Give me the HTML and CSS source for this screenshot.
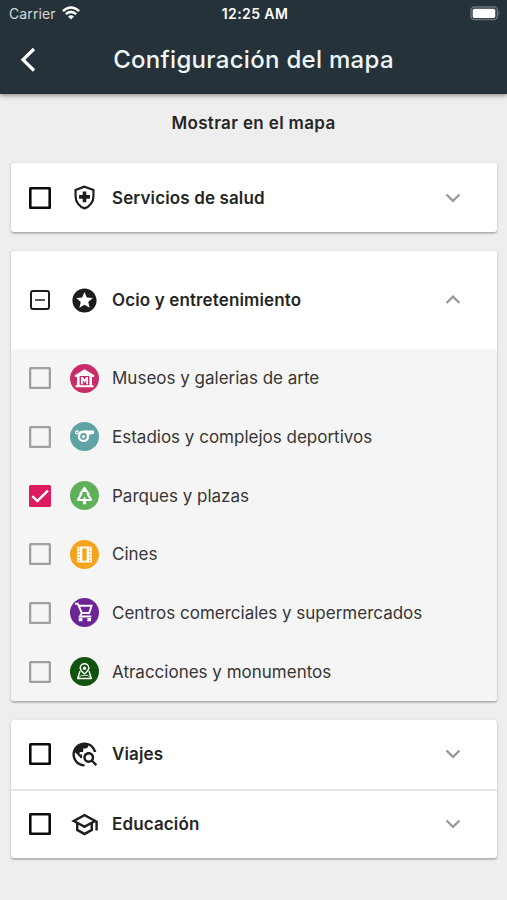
FILE: index.html
```html
<!DOCTYPE html>
<html lang="es">
<head>
<meta charset="utf-8">
<title>Configuración del mapa</title>
<link rel="stylesheet" href="styles.css">
</head>
<body>
<header class="header">
  <div class="status">
    <div class="carrier"><span>Carrier</span>
      <svg class="wifi" viewBox="0 0 18 14"><g fill="none" stroke="#fff" stroke-width="2.5"><path d="M.9 5.1Q9-2 17.1 5.1"/><path d="M3.8 8.1Q9 3.7 14.2 8.1"/></g><path d="M6 10.5Q9 8 12 10.5L9 13.6z" fill="#fff"/></svg>
    </div>
    <div class="clock">12:25 AM</div>
    <svg class="battery" viewBox="0 0 31 15"><rect x="1" y="1" width="26.4" height="12.6" rx="3.6" fill="none" stroke="#68747a" stroke-width="1.5"/><rect x="2.7" y="2.7" width="22.6" height="9.2" rx="1.6" fill="#fff"/><path d="M28.6 5q1.9 2.3 0 4.6z" fill="#707a7f"/></svg>
  </div>
  <div class="bar">
    <svg class="back" viewBox="0 0 16 26"><path d="M14 2 3 12.7 14 23.5" fill="none" stroke="#fff" stroke-width="3.2"/></svg>
    <h1>Configuración del mapa</h1>
  </div>
</header>
<main>
  <h2>Mostrar en el mapa</h2>

  <section class="card">
    <div class="row">
      <span class="check"></span>
      <svg class="icon" viewBox="0 0 24 24"><path fill="none" stroke="#1d1d1d" stroke-width="1.8" d="M12 3 4.600 5.700v5.400c0 4.500 3.200 8.600 7.400 9.900 4.200-1.300 7.400-5.400 7.400-9.900V5.700z"/><path fill="#1d1d1d" d="M10.500 7h3v3h3v3h-3v3h-3v-3h-3v-3h3z"/></svg>
      <span class="label">Servicios de salud</span>
      <svg class="chevron" viewBox="0 0 16 10"><path d="m1.500 1.500 6.500 6.300 6.500-6.300"/></svg>
    </div>
  </section>

  <section class="card">
    <div class="row tall">
      <span class="check partial"></span>
      <svg class="icon" viewBox="0 0 24 24"><path fill="#1d1d1d" d="M11.990 2C6.470 2 2 6.480 2 12s4.470 10 9.990 10C17.520 22 22 17.520 22 12S17.520 2 11.990 2zm4.240 16L12 15.450 7.770 18l1.120-4.810-3.730-3.230 4.920-.42L12 5l1.920 4.530 4.920.42-3.730 3.230L16.230 18z"/></svg>
      <span class="label">Ocio y entretenimiento</span>
      <svg class="chevron" viewBox="0 0 16 10"><path d="M1.500 8 8 1.700 14.500 8"/></svg>
    </div>
    <ul class="items">
      <li class="item"><span class="check"></span>
        <svg class="icon" viewBox="0 0 29 29"><circle cx="14.5" cy="14.5" r="14.5" fill="#c92d68"/><path fill="#fff" d="M14.500 5.200 24.200 11.200v1.700h-2.200v8.300h1.500v2h-18v-2h1.500v-8.300H4.800v-1.700z"/><path fill="#c92d68" d="M9.600 12h9.800v9.200H9.600z"/><path fill="#fff" d="M11 12.900h1.800l1.700 2.600 1.700-2.600H18v7.400h-1.800v-4l-1.700 2.500-1.700-2.500v4H11z"/></svg>
        <span class="label">Museos y galerias de arte</span></li>
      <li class="item"><span class="check"></span>
        <svg class="icon" viewBox="0 0 29 29"><circle cx="14.5" cy="14.5" r="14.5" fill="#60a3a5"/><circle cx="13.5" cy="14.400" r="4.500" fill="none" stroke="#fff" stroke-width="2.300"/><circle cx="13.500" cy="14.400" r="1.500" fill="#fff"/><path fill="#fff" d="M10 9.200q1.500-.8 3.500-.8h10.500v3.400l-5.600 1.200-3-2.200H9z"/><circle cx="7" cy="10.300" r="1.500" fill="none" stroke="#fff" stroke-width="1.200"/></svg>
        <span class="label">Estadios y complejos deportivos</span></li>
      <li class="item"><span class="check checked"><svg viewBox="0 0 22 22"><path d="m3.400 11.200 4.900 4.900L18.900 5.700" fill="none" stroke="#fff" stroke-width="2.500"/></svg></span>
        <svg class="icon" viewBox="0 0 29 29"><circle cx="14.5" cy="14.5" r="14.5" fill="#60b05b"/><path fill="none" stroke="#fff" stroke-width="2" stroke-linejoin="round" d="m14.500 6.800 4.300 6.200h-1.300l3.700 5.900H7.800l3.700-5.900h-1.300z"/><path fill="#fff" d="M12.900 19h3.200v4.200h-3.200zM14.500 6l2.800 5h-5.600zM13.700 16h1.600v3h-1.600z"/></svg>
        <span class="label">Parques y plazas</span></li>
      <li class="item"><span class="check"></span>
        <svg class="icon" viewBox="0 0 29 29"><circle cx="14.5" cy="14.5" r="14.5" fill="#f6a31d"/><path fill="#fff" d="M7.200 6.400q1.600.8 3.200 0h8.200q1.600.8 3.200 0v16.200q-1.600-.8-3.200 0h-8.200q-1.600-.8-3.200 0z"/><path fill="none" stroke="#f6a31d" stroke-width="1.200" stroke-dasharray="1.500 1.500" d="M9.200 7.800v14M19.800 7.800v14"/><rect x="12.300" y="8.300" width="4.400" height="12.400" rx="1" fill="#f6a31d"/></svg>
        <span class="label">Cines</span></li>
      <li class="item"><span class="check"></span>
        <svg class="icon" viewBox="0 0 29 29"><circle cx="14.5" cy="14.5" r="14.5" fill="#6d2596"/><path fill="none" stroke="#fff" stroke-width="1.900" d="M5 5.800h2.800l4 9.200h7.400l2.400-7.200H8.700M11.800 15l-2 3.500h11.500"/><path fill="#fff" d="M8.800 20h3.600v3.300H8.800zM17.400 20H21v3.300h-3.600z"/></svg>
        <span class="label">Centros comerciales y supermercados</span></li>
      <li class="item"><span class="check"></span>
        <svg class="icon" viewBox="0 0 29 29"><circle cx="14.5" cy="14.5" r="14.5" fill="#11540f"/><g fill="none" stroke="#fff" stroke-width="1.400" stroke-linejoin="round"><path d="M14.500 17c-2.200-2-4.300-3.700-4.300-5.900a4.300 4.300 0 0 1 8.600 0c0 2.200-2.100 3.900-4.300 5.900z"/><path d="M10.400 14.500H9.900L7.700 21.500h13.600l-2.200-7h-.5"/><path d="m8.500 21 2.600-2.600h6.800l2.600 2.600" stroke-width=".8"/></g><circle cx="14.500" cy="11.200" r="1.700" fill="#fff"/></svg>
        <span class="label">Atracciones y monumentos</span></li>
    </ul>
  </section>

  <section class="card">
    <div class="row">
      <span class="check"></span>
      <svg class="icon" viewBox="0 0 24 24"><path fill="#1d1d1d" d="M19.300 16.900c.4-.7.700-1.500.700-2.400 0-2.500-2-4.500-4.500-4.500S11 12 11 14.500s2 4.500 4.500 4.500c.9 0 1.700-.3 2.400-.7l3.200 3.200 1.400-1.400-3.200-3.200zm-3.800.1c-1.400 0-2.500-1.100-2.500-2.500s1.100-2.500 2.500-2.500 2.500 1.100 2.500 2.500-1.100 2.500-2.500 2.500zM12 20v2C6.480 22 2 17.520 2 12S6.480 2 12 2c4.840 0 8.870 3.440 9.800 8h-2.070c-.64-2.460-2.400-4.470-4.730-5.410V5c0 1.100-.9 2-2 2h-2v2c0 .55-.45 1-1 1H8v2h2v3H9l-4.790-4.790C4.080 10.790 4 11.380 4 12c0 4.410 3.590 8 8 8z"/></svg>
      <span class="label">Viajes</span>
      <svg class="chevron" viewBox="0 0 16 10"><path d="m1.500 1.500 6.500 6.300 6.500-6.300"/></svg>
    </div>
    <div class="row divided">
      <span class="check"></span>
      <svg class="icon" viewBox="0 0 24 24"><path fill="#1d1d1d" d="M12 3 1 9l4 2.180v6L12 21l7-3.820v-6l2-1.090V17h2V9L12 3zm6.820 6L12 12.720 5.180 9 12 5.280 18.820 9zM17 15.990l-5 2.730-5-2.730v-3.720L12 15l5-2.730v3.720z"/></svg>
      <span class="label">Educación</span>
      <svg class="chevron" viewBox="0 0 16 10"><path d="m1.500 1.500 6.500 6.300 6.500-6.300"/></svg>
    </div>
  </section>
</main>
</body>
</html>
```
FILE: styles.css
```css
* { box-sizing: border-box; }
body {
  margin: 0;
  min-height: 900px;
  background: #eee;
  color: #262626;
  font-family: Inter, "Liberation Sans", sans-serif;
}
.header {
  height: 94px;
  background: #263239;
  color: #fff;
  box-shadow: 0 1px 5px rgba(0, 0, 0, .5);
}
.status {
  display: grid;
  grid-template-columns: 1fr auto 1fr;
  align-items: center;
  height: 27px;
  padding: 0 6px 0 9px;
}
.carrier {
  display: flex;
  align-items: center;
  gap: 6px;
  font-size: 14px;
  letter-spacing: .1px;
  color: #d5dadd;
}
.wifi { width: 18px; height: 14px; margin-top: -2px; }
.clock { font-size: 14px; font-weight: 600; letter-spacing: .4px; }
.battery { width: 31px; height: 15px; justify-self: end; }
.bar {
  display: grid;
  grid-template-columns: 36px 1fr 36px;
  align-items: center;
  height: 66px;
}
.back { width: 16px; height: 26px; margin-left: 20px; }
h1 {
  margin: -2px 0 0;
  text-align: center;
  font-size: 24px;
  font-weight: 500;
  color: #eef6f8;
  letter-spacing: .3px;
}
h2 {
  margin: 0 0 10px;
  height: 59px;
  line-height: 58px;
  text-align: center;
  font-size: 17px;
  font-weight: 600;
  letter-spacing: .35px;
}
.card {
  margin: 0 10px 19px 11px;
  border-radius: 3px;
  background: #fff;
  overflow: hidden;
  box-shadow: 0 1px 3px rgba(0, 0, 0, .22), 0 2px 1px rgba(0, 0, 0, .12);
}
.row, .item {
  display: flex;
  align-items: center;
  padding: 0 36px 0 18px;
}
.row { height: 69px; }
.row.tall { height: 98px; }
.row.divided { height: 69px; border-top: 2px solid #e6e6e6; }
.check {
  flex: none;
  width: 22px;
  height: 22px;
  border-radius: 1.5px;
  box-shadow: inset 0 0 0 2.6px #0c0c0c;
}
.check.partial {
  display: grid;
  place-items: center;
  width: 20px;
  height: 20px;
  margin: 0 1px;
  border-radius: 3px;
  box-shadow: inset 0 0 0 2px #1d1d1d;
}
.check.partial::before { content: ""; width: 10px; height: 2px; background: #555; }
.icon { flex: none; width: 29px; height: 29px; margin-left: 19px; }
.label { flex: 1; margin-left: 13px; white-space: nowrap; font-size: 17px; }
.row .label { font-weight: 600; letter-spacing: .13px; }
.chevron { width: 16px; height: 10px; }
.chevron path { fill: none; stroke: #999; stroke-width: 2.3; }
.items { margin: 0; padding: 0; list-style: none; background: #f5f5f5; }
.item { height: 58.66px; }
.item .check { box-shadow: inset 0 0 0 2.3px #a0a0a0; }
.item .check.checked { box-shadow: none; background: #dc1b60; }
.checked svg { display: block; }
.item .label { color: #363636; letter-spacing: 0; }
```
